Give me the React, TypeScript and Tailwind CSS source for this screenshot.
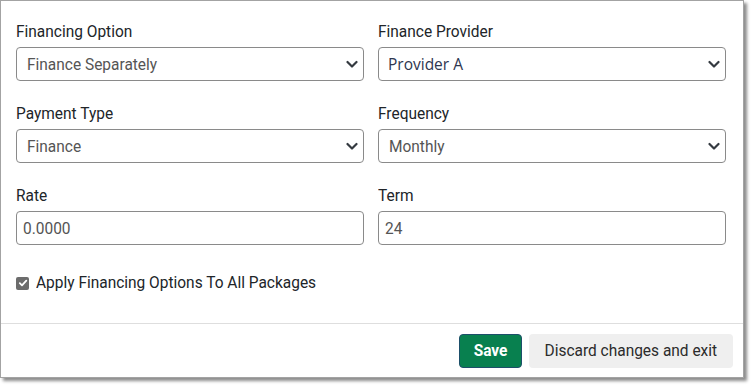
import React from "react";

const C = ({ children, className = "" }: { children: React.ReactNode; className?: string }) => (
  <span className={"inline-block whitespace-nowrap origin-left scale-x-[0.91] text-[17px] " + className}>{children}</span>
);

const CC = ({ children, className = "" }: { children: React.ReactNode; className?: string }) => (
  <span className={"inline-block whitespace-nowrap origin-center scale-x-[0.91] text-[17px] " + className}>{children}</span>
);

const Chevron = () => (
  <svg width="12" height="9" viewBox="0 0 12 9" className="absolute right-[5px] top-1/2 -translate-y-1/2">
    <path d="M1.5 2.5 6 7l4.5-4.5" fill="none" stroke="#343a40" strokeWidth="2.2" strokeLinecap="round" strokeLinejoin="round" />
  </svg>
);

const Label = ({ children }: { children: React.ReactNode }) => (
  <div className="h-6 leading-6 text-[#212529] mb-1">
    <C>{children}</C>
  </div>
);

const Select = ({ value, alt }: { value: string; alt?: boolean }) => (
  <div className="relative h-[34px] rounded-[4px] border border-[#8a8a8a] bg-white flex items-center">
    {alt ? (
      <span className="pl-[9px] pt-[2px] text-[15.5px] text-[#2e3650]" style={{ fontFamily: '"Open Sans", sans-serif' }}>{value}</span>
    ) : (
      <span className="pl-[10px] pt-px text-[#555555]">
        <C>{value}</C>
      </span>
    )}
    <Chevron />
  </div>
);

const Input = ({ value }: { value: string }) => (
  <div className="h-[34px] rounded-[4px] border border-[#8a8a8a] bg-white flex items-center pl-[6px] pt-px text-[#555555]">
    <C>{value}</C>
  </div>
);

export default function App() {
  return (
    <div className="w-[751px] h-[385px] bg-white" style={{ fontFamily: 'Roboto, "Liberation Sans", sans-serif' }}>
      <div className="w-[744px] h-[378px] border border-[#a3a3a3] bg-white flex flex-col shadow-[3px_3px_3px_rgba(0,0,0,0.45)]">
        <div className="pt-[18px] pl-[15px] pr-[17px] flex flex-col">
          <div className="grid grid-cols-2 gap-x-[14px] gap-y-5">
            <div>
              <Label>Financing Option</Label>
              <Select value="Finance Separately" />
            </div>
            <div>
              <Label>Finance Provider</Label>
              <Select value="Provider A" alt />
            </div>
            <div>
              <Label>Payment Type</Label>
              <Select value="Finance" />
            </div>
            <div>
              <Label>Frequency</Label>
              <Select value="Monthly" />
            </div>
            <div>
              <Label>Rate</Label>
              <Input value="0.0000" />
            </div>
            <div>
              <Label>Term</Label>
              <Input value="24" />
            </div>
          </div>
          <div className="mt-[26px] h-6 flex items-center gap-[7px]">
            <div className="w-[13px] h-[13px] rounded-[2px] bg-[#6c6c6c] flex items-center justify-center">
              <svg width="10" height="10" viewBox="0 0 10 10">
                <path d="M1.8 5.2 4 7.3 8.3 2.6" fill="none" stroke="white" strokeWidth="1.8" strokeLinecap="round" strokeLinejoin="round" />
              </svg>
            </div>
            <C className="text-[#212529]">Apply Financing Options To All Packages</C>
          </div>
        </div>
        <div className="mt-auto border-t border-[#dedede] h-[54px] flex items-center justify-end gap-[7px] pr-[10px]">
          <button className="h-[34px] w-[63px] rounded-[4px] bg-[#08804f] border border-[#1d4f6a] text-white flex items-center justify-center">
            <CC className="font-bold">Save</CC>
          </button>
          <button className="h-[34px] w-[204px] rounded-[4px] bg-[#efefef] text-[#2b2b2b] flex items-center justify-center">
            <CC>Discard changes and exit</CC>
          </button>
        </div>
      </div>
    </div>
  );
}
